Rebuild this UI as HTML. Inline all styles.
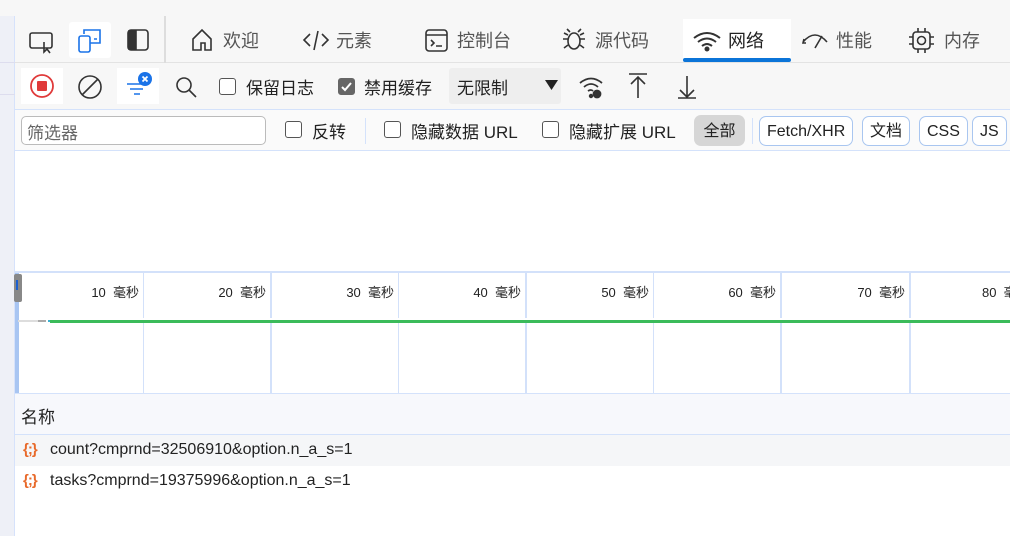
<!DOCTYPE html>
<html><head><meta charset="utf-8"><style>
*{margin:0;padding:0;box-sizing:border-box}
body{width:1010px;height:536px;overflow:hidden;background:#fff;font-family:"Liberation Sans","Noto Sans CJK SC",sans-serif;position:relative;color:#222}
.a{position:absolute;white-space:nowrap}
.t{font-size:18px;color:#555;top:27px}
svg{position:absolute;fill:none;stroke:#333;stroke-width:1.6}
.cb{position:absolute;width:17px;height:17px;border:1.5px solid #555;border-radius:3px;background:#fff}
.lbl{position:absolute;font-size:17px;color:#222;white-space:nowrap}
.pill{position:absolute;top:116px;height:30px;border:1px solid #a9c6f0;border-radius:7px;font-size:16px;line-height:30px;padding:0 7px;background:#fff;white-space:nowrap}
.vl{position:absolute;width:2px;background:#d3e1fa}
.ms{position:absolute;top:282px;font-size:13px;color:#222;text-align:right;width:120px;white-space:nowrap}
</style></head><body>
<div class="a" style="left:0;top:0;width:1010px;height:16px;background:#f7f7f7"></div>
<div class="a" style="left:0;top:16px;width:15px;height:520px;background:#eef0f7;border-right:1px solid #d6e2fb"></div>
<div class="a" style="left:0;top:62px;width:15px;height:1px;background:#dde"></div>
<div class="a" style="left:0;top:94px;width:15px;height:1px;background:#dde"></div>
<div class="a" style="left:15px;top:16px;width:995px;height:47px;background:#f7f7f7;border-bottom:1px solid #e3e3e3"></div>
<div class="a" style="left:69px;top:22px;width:42px;height:36px;background:#fff;border-radius:3px"></div>
<svg style="left:28px;top:28px" width="30" height="28"><rect x="2" y="5" width="22" height="15" rx="2"/><path d="M16 14l0 10 3-3 3 4" /></svg>
<svg style="left:76px;top:26px;stroke:#1a73e8" width="30" height="30"><rect x="3" y="10" width="11" height="16" rx="2"/><path d="M8 8V4h16v13h-10M18 13h3"/></svg>
<svg style="left:126px;top:28px" width="26" height="26"><rect x="2" y="2" width="20" height="20" rx="3"/><rect x="3" y="3" width="7" height="18" fill="#333"/></svg>
<div class="a" style="left:164px;top:16px;width:2px;height:47px;background:#ddd"></div>
<svg style="left:190px;top:27px" width="26" height="26"><path d="M3 12L12 3l9 9v11h-6v-7h-4v7H3z"/></svg>
<div class="a t" style="left:223px">欢迎</div>
<svg style="left:302px;top:28px" width="28" height="24"><path d="M8 6L2 12l6 6M20 6l6 6-6 6M16 3l-4 19"/></svg>
<div class="a t" style="left:336px">元素</div>
<svg style="left:424px;top:28px" width="26" height="26"><rect x="2" y="2" width="21" height="21" rx="3"/><path d="M2 7h21M7 12l3 3-3 3M12 18h6"/></svg>
<div class="a t" style="left:457px">控制台</div>
<svg style="left:561px;top:26px" width="26" height="28"><ellipse cx="13" cy="15" rx="6" ry="8"/><path d="M9 6l-3-3M17 6l3-3M7 13H2M19 13h5M7 19l-4 3M19 19l4 3M7 9L3 7M19 9l4-2"/></svg>
<div class="a t" style="left:595px">源代码</div>
<div class="a" style="left:683px;top:19px;width:108px;height:42px;background:#fff"></div>
<div class="a" style="left:683px;top:58px;width:108px;height:4px;background:#0b74d8;border-radius:2px"></div>
<svg style="left:692px;top:30px;stroke-width:2" width="30" height="22"><path d="M2 8q13-10 26 0M6 12q9-7 18 0M10 16q5-4 10 0"/><circle cx="15" cy="19" r="1.5" fill="#333"/></svg>
<div class="a t" style="left:728px;color:#222">网络</div>
<svg style="left:800px;top:30px" width="30" height="22"><path d="M3 12q12-14 24 0M15 18l7-12M4 9l-1 4 3 0"/></svg>
<div class="a t" style="left:836px">性能</div>
<svg style="left:908px;top:27px" width="28" height="28"><rect x="5" y="5" width="17" height="17" rx="3"/><circle cx="13.5" cy="13.5" r="4"/><path d="M10 1v4M17 1v4M10 22v4M17 22v4M1 10h4M1 17h4M22 10h4M22 17h4"/></svg>
<div class="a t" style="left:944px">内存</div>
<!-- toolbar -->
<div class="a" style="left:15px;top:63px;width:995px;height:47px;background:#f7f7f7;border-bottom:1px solid #d4e2fb"></div>
<div class="a" style="left:21px;top:68px;width:42px;height:36px;background:#fff"></div>
<svg style="left:29px;top:72px;stroke:#e03a3a;stroke-width:1.8" width="28" height="28"><circle cx="13" cy="14" r="11"/><rect x="8" y="9" width="10" height="10" rx="1" fill="#e03a3a" stroke="none"/></svg>
<svg style="left:77px;top:74px" width="28" height="28"><circle cx="13" cy="13" r="11"/><path d="M5 21L21 5"/></svg>
<div class="a" style="left:117px;top:68px;width:42px;height:36px;background:#fff"></div>
<svg style="left:124px;top:70px;stroke:#1a73e8" width="34" height="30"><path d="M3 14h18M6 19h13M10 24h6"/><circle cx="21" cy="9" r="7" fill="#1a73e8" stroke="none"/><path d="M18.5 6.5l5 5M23.5 6.5l-5 5" stroke="#fff" stroke-width="1.8"/></svg>
<svg style="left:174px;top:75px" width="26" height="26"><circle cx="10" cy="10" r="7"/><path d="M15 15l7 7"/></svg>
<div class="cb" style="left:219px;top:78px"></div>
<div class="lbl" style="left:246px;top:74px">保留日志</div>
<div class="cb" style="left:338px;top:78px;background:#666;border-color:#666"></div>
<svg style="left:340px;top:80px;stroke:#fff;stroke-width:2" width="14" height="14"><path d="M2 7l3 3 6-7"/></svg>
<div class="lbl" style="left:364px;top:74px">禁用缓存</div>
<div class="a" style="left:449px;top:68px;width:112px;height:36px;background:#eee;border-radius:3px"></div>
<div class="lbl" style="left:457px;top:74px">无限制</div>
<svg style="left:545px;top:80px;fill:#222;stroke:none" width="14" height="12"><path d="M0 0h13L6.5 10z"/></svg>
<svg style="left:578px;top:74px;stroke-width:1.8" width="28" height="28"><path d="M2 9q11-9 22 0M6 13q7-6 14 0M10 17q3-2 5 0"/><circle cx="19" cy="20" r="3.5" fill="#333"/><circle cx="13" cy="22" r="1.3" fill="#333"/></svg>
<svg style="left:626px;top:72px" width="24" height="28"><path d="M3 2h18M12 26V5M5 12l7-7 7 7"/></svg>
<svg style="left:675px;top:74px" width="24" height="28"><path d="M3 24h18M12 2v21M5 16l7 7 7-7"/></svg>
<!-- filter row -->
<div class="a" style="left:15px;top:110px;width:995px;height:41px;background:#fafafa;border-bottom:1px solid #d4e2fb"></div>
<div class="a" style="left:21px;top:116px;width:245px;height:29px;border:1px solid #bbb;border-radius:5px;background:#fff"></div>
<div class="lbl" style="left:27px;top:119px;color:#666">筛选器</div>
<div class="cb" style="left:285px;top:121px"></div>
<div class="lbl" style="left:312px;top:118px">反转</div>
<div class="a" style="left:365px;top:118px;width:1px;height:26px;background:#d4e2fb"></div>
<div class="cb" style="left:384px;top:121px"></div>
<div class="lbl" style="left:411px;top:118px">隐藏数据 URL</div>
<div class="cb" style="left:542px;top:121px"></div>
<div class="lbl" style="left:569px;top:118px">隐藏扩展 URL</div>
<div class="a" style="left:694px;top:115px;width:51px;height:31px;background:#d6d6d6;border-radius:7px;font-size:16px;line-height:33px;text-align:center">全部</div>
<div class="a" style="left:752px;top:118px;width:1px;height:26px;background:#d4e2fb"></div>
<div class="pill" style="left:759px">Fetch/XHR</div>
<div class="pill" style="left:862px">文档</div>
<div class="pill" style="left:919px">CSS</div>
<div class="pill" style="left:972px">JS</div>
<!-- timeline -->
<div class="a" style="left:15px;top:271px;width:995px;height:2px;background:#d3e1fa"></div>
<div class="a" style="left:15px;top:273px;width:4px;height:120px;background:#a8c5f2"></div>
<div class="a" style="left:14px;top:274px;width:8px;height:28px;background:#888;border-radius:2px"></div>
<div class="a" style="left:16px;top:280px;width:2px;height:10px;background:#1a5fd0"></div>
<div class="vl" style="left:143px;top:273px;height:120px;width:1px"></div>
<div class="vl" style="left:270px;top:273px;height:120px"></div>
<div class="vl" style="left:398px;top:273px;height:120px;width:1px"></div>
<div class="vl" style="left:525px;top:273px;height:120px"></div>
<div class="vl" style="left:653px;top:273px;height:120px;width:1px"></div>
<div class="vl" style="left:780px;top:273px;height:120px"></div>
<div class="vl" style="left:909px;top:273px;height:120px"></div>
<div class="a" style="left:22px;top:318px;width:988px;height:5px;background:#fff"></div>
<div class="a" style="left:18px;top:320px;width:20px;height:2px;background:#ddd"></div>
<div class="a" style="left:38px;top:320px;width:8px;height:2px;background:#aaa"></div>
<div class="a" style="left:48px;top:320px;width:2px;height:2px;background:#3ab0d0"></div>
<div class="a" style="left:50px;top:320px;width:960px;height:3px;background:#3bbb5a"></div>
<div class="ms" style="left:19px">10 &nbsp;毫秒</div>
<div class="ms" style="left:146px">20 &nbsp;毫秒</div>
<div class="ms" style="left:274px">30 &nbsp;毫秒</div>
<div class="ms" style="left:401px">40 &nbsp;毫秒</div>
<div class="ms" style="left:529px">50 &nbsp;毫秒</div>
<div class="ms" style="left:656px">60 &nbsp;毫秒</div>
<div class="ms" style="left:785px">70 &nbsp;毫秒</div>
<div class="a" style="left:982px;top:282px;font-size:13px">80 &nbsp;毫秒</div>
<!-- list -->
<div class="a" style="left:15px;top:393px;width:995px;height:42px;background:#f7f8fc;border-top:1px solid #d4e2fb;border-bottom:1px solid #d4e2fb"></div>
<div class="lbl" style="left:21px;top:403px">名称</div>
<div class="a" style="left:15px;top:435px;width:995px;height:31px;background:#f5f6f8"></div>
<div class="a" style="left:23px;top:441px;font-size:15px;color:#e8692a;font-weight:bold;letter-spacing:-1px">{;}</div>
<div class="lbl" style="left:50px;top:441px;font-size:16px">count?cmprnd=32506910&amp;option.n_a_s=1</div>
<div class="a" style="left:23px;top:472px;font-size:15px;color:#e8692a;font-weight:bold;letter-spacing:-1px">{;}</div>
<div class="lbl" style="left:50px;top:472px;font-size:16px">tasks?cmprnd=19375996&amp;option.n_a_s=1</div>
</body></html>
